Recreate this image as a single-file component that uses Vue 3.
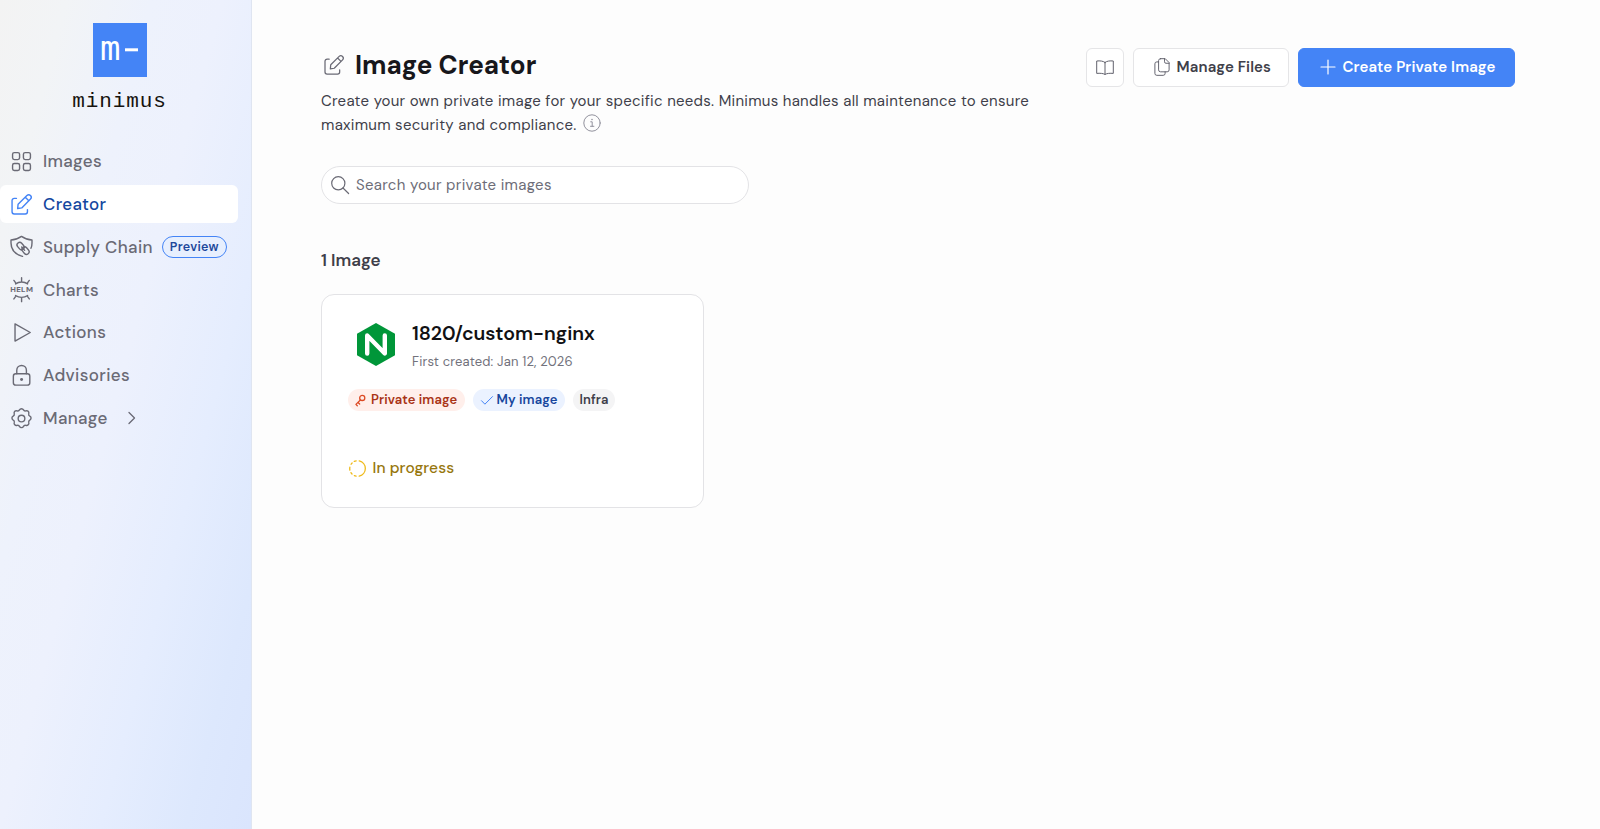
<template>
  <div class="layout">
    <!-- Sidebar -->
    <aside class="sidebar">
      <div class="brand">
        <svg class="brand-mark" viewBox="0 0 54 54">
          <rect width="54" height="54" fill="#4484f6" />
          <text class="brand-letter" x="7" y="36.500">m</text>
          <rect x="32" y="25.300" width="13" height="3" fill="#fff" />
        </svg>
        <span class="brand-name">minimus</span>
      </div>

      <nav class="nav">
        <a
          v-for="item in navItems"
          :key="item.id"
          class="nav-item"
          :class="{ active: item.id === current }"
          @click="current = item.id"
        >
          <svg class="nav-icon" viewBox="0 0 24 24">
            <g v-if="item.id === 'images'">
              <rect x="1.800" y="1.800" width="8" height="8" rx="2" />
              <rect x="14.200" y="1.800" width="8" height="8" rx="2" />
              <rect x="1.800" y="14.200" width="8" height="8" rx="2" />
              <rect x="14.200" y="14.200" width="8" height="8" rx="2" />
            </g>
            <path v-else-if="item.id === 'creator'" :d="editPath" />
            <g v-else-if="item.id === 'supply'">
              <path d="M13.200 23.300C5 21 0 15.500 0 8V4.500C5 4.500 8.500 3 12 .500c3.500 2.500 7 4 12 4V8c0 2.300-.4 4.300-1.200 6" />
              <rect x="8" y="6.800" width="6" height="9.400" rx="3" transform="rotate(-40 11 11.500)" />
              <rect x="13.600" y="12" width="6" height="9.400" rx="3" transform="rotate(-40 16.600 16.700)" />
              <path d="M12.200 12.600l3.400 3.800" />
            </g>
            <g v-else-if="item.id === 'charts'">
              <path d="M5.200 5.600c4-3 9.800-3 13.800 0M5.200 18.800c4 3 9.800 3 13.800 0M12.100 3.300V-1.500M5.800 5.100L3.300 1.600M18.400 5.100l2.500-3.500M12.100 21.100v4.800M5.800 19.300l-2.500 3.500M18.400 19.300l2.500 3.500" />
              <text class="helm" x="-1" y="15.300" textLength="26">HELM</text>
            </g>
            <path v-else-if="item.id === 'actions'" d="M4.600 2.200v19.600L22 12z" />
            <g v-else-if="item.id === 'advisories'">
              <rect x="2.700" y="10" width="18.800" height="13" rx="2.800" />
              <path d="M6.600 10V6a5.500 5.500 0 0 1 11 0v4" />
              <circle class="solid" cx="12.100" cy="16.500" r="1.700" />
            </g>
            <g v-else>
              <path :d="gearPath" />
              <circle cx="12" cy="12" r="3.800" />
            </g>
          </svg>
          <span class="nav-label">{{ item.label }}</span>
          <span v-if="item.badge" class="preview-badge">{{ item.badge }}</span>
          <svg v-if="item.expandable" class="chevron" viewBox="0 0 8 14">
            <path d="M1 1.500L6.500 7 1 12.500" />
          </svg>
        </a>
      </nav>
    </aside>

    <!-- Main content -->
    <main class="main">
      <header class="header">
        <div class="intro">
          <div class="heading">
            <svg class="heading-icon" viewBox="0 0 24 24"><path :d="editPath" /></svg>
            <h1>Image Creator</h1>
          </div>
          <p class="description">
            Create your own private image for your specific needs. Minimus handles all maintenance to ensure<br>
            <span>maximum security and compliance.</span>
            <svg class="info" viewBox="0 0 18 18">
              <circle cx="9" cy="9" r="8.200" />
              <path d="M7.700 7.800h1.500v4.500M7.500 12.300h3.400" />
              <circle class="solid" cx="9" cy="5.500" r=".8" />
            </svg>
          </p>
        </div>

        <div class="header-actions">
          <button class="btn btn-icon">
            <svg class="book" viewBox="0 0 18 15">
              <path d="M9 2.400C7 .9 4 .7.700 1v12.400c3.300-.3 6.300-.1 8.300 1 2-1.100 5-1.300 8.300-1V1C14 .700 11 .9 9 2.400zM9 2.400v12" />
            </svg>
          </button>
          <button class="btn btn-files">
            <svg class="files" viewBox="0 0 16 19">
              <path d="M6.500.700h4.800l4 4v7.500a2 2 0 0 1-2 2H6.500a2 2 0 0 1-2-2V2.700a2 2 0 0 1 2-2zM10.600.700V3.900a1.500 1.500 0 0 0 1.500 1.500h3.200M4.500 4H2.700a2 2 0 0 0-2 2v9.800a2 2 0 0 0 2 2h6.500a2 2 0 0 0 2-2v-1.600" />
            </svg>
            <span>Manage Files</span>
          </button>
          <button class="btn btn-primary">
            <svg class="plus" viewBox="0 0 14 14"><path d="M7 0v14M0 7h14" /></svg>
            <span>Create Private Image</span>
          </button>
        </div>
      </header>

      <div class="search">
        <svg class="search-icon" viewBox="0 0 18 18">
          <circle cx="7.300" cy="7.300" r="6.600" />
          <path d="M12 12l5.600 5.500" />
        </svg>
        <input v-model="query" type="text" placeholder="Search your private images">
      </div>

      <h2 class="count">1 Image</h2>

      <article class="card">
        <div class="card-head">
          <svg class="nginx" viewBox="0 0 38 43">
            <path d="M19 0l19 10.700v21.600L19 43 0 32.300V10.700z" fill="#009639" />
            <path d="M10.200 30.500V12.500L27.800 30.500V12.500" fill="none" stroke="#fff" stroke-width="4.400" stroke-linecap="round" stroke-linejoin="round" />
          </svg>
          <div>
            <h3>1820/custom-nginx</h3>
            <p class="created">First created: Jan 12, 2026</p>
          </div>
        </div>

        <div class="tags">
          <span class="tag tag-private">
            <svg class="key" viewBox="0 0 12 13">
              <circle cx="7.900" cy="3.700" r="2.800" />
              <path d="M5.900 5.900L1 10.700l1.500 1.500M3.300 8.600l1.800 1.800" />
            </svg>
            <span>Private image</span>
          </span>
          <span class="tag tag-mine">
            <svg class="check" viewBox="0 0 12 9"><path d="M.5 4.700l3.400 3.500L11.500.600" /></svg>
            <span>My image</span>
          </span>
          <span class="tag tag-infra">Infra</span>
        </div>

        <div class="status">
          <svg class="spinner" viewBox="0 0 18 18">
            <path d="M10.800.900a8.300 8.300 0 0 1 0 16.200M7.500 17.150a8.200 8.200 0 0 1-1.800-.6M3.200 14.900a8.200 8.200 0 0 1-1.100-1.500M.9 10.600a8.200 8.200 0 0 1 0-2.900M2.200 4.500a8.200 8.200 0 0 1 1.100-1.400M5.600 1.500a8.200 8.200 0 0 1 2-.6" />
          </svg>
          <span>In progress</span>
        </div>
      </article>
    </main>
  </div>
</template>

<script setup>
import { ref } from 'vue'

const current = ref('creator')
const query = ref('')

const navItems = [
  { id: 'images', label: 'Images' },
  { id: 'creator', label: 'Creator' },
  { id: 'supply', label: 'Supply Chain', badge: 'Preview' },
  { id: 'charts', label: 'Charts' },
  { id: 'actions', label: 'Actions' },
  { id: 'advisories', label: 'Advisories' },
  { id: 'manage', label: 'Manage', expandable: true }
]

// shared by the sidebar entry and the page heading
const editPath =
  'M6.200 5H3.700A2.500 2.500 0 0 0 1.200 7.500v12.800a2.500 2.500 0 0 0 2.500 2.500h12.600a2.500 2.500 0 0 0 2.500-2.500v-2.500' +
  'M7.600 16.600l.5-4.900L18.200 1.700a2.900 2.900 0 0 1 4.100 4.100L12.300 15.900zM16.300 3.600l4.100 4.100'

const gearPath =
  'M9.700 2.200c1-1.900 3.600-1.900 4.600 0 .5 1 1.600 1.400 2.700 1.100 2-.7 3.900 1.100 3.300 3.200-.3 1 .1 2.200 1.200 2.700' +
  ' 1.900 1 1.900 3.600 0 4.600-1 .5-1.500 1.600-1.200 2.700.7 2.100-1.200 4-3.300 3.300-1-.3-2.200.1-2.700 1.200-1 1.900-3.600 1.900-4.600 0' +
  '-.5-1-1.600-1.500-2.700-1.200-2.100.7-4-1.200-3.300-3.300.3-1-.1-2.200-1.200-2.700-1.900-1-1.900-3.600 0-4.600 1-.5 1.500-1.600 1.200-2.700' +
  '-.7-2.100 1.200-3.900 3.300-3.200 1 .3 2.200-.1 2.700-1.100z'
</script>

<style>
body {
  margin: 0;
  background: #fdfdfd;
}
</style>

<style scoped>
.layout {
  display: flex;
  min-height: 829px;
  font-family: "DM Sans", Inter, "Liberation Sans", sans-serif;
  color: #3f3f4a;
}

svg {
  display: block;
  flex: none;
  overflow: visible;
  fill: none;
  stroke: currentColor;
  stroke-linecap: round;
  stroke-linejoin: round;
}

.solid {
  fill: currentColor;
  stroke: none;
}

h1, h2, h3, p {
  margin: 0;
}

/* Sidebar */
.sidebar {
  box-sizing: border-box;
  flex: none;
  width: 252px;
  border-right: 1px solid #dfe5f1;
  background: linear-gradient(105deg, #f3f3f3 0%, #f2f4f6 14%, #eef2fc 32%, #edf1fd 47%, #e5edfe 68%, #dde8fd 86%, #dae5fd 100%);
}

.brand {
  display: flex;
  flex-direction: column;
  align-items: center;
  height: 142px;
  padding: 22.500px 12px 0 0;
  box-sizing: border-box;
}

.brand-mark {
  width: 54px;
  height: 54px;
  stroke: none;
}

.brand-letter {
  fill: #fff;
  font: 34px "DejaVu Sans Mono", monospace;
}

.brand-name {
  margin-top: 11px;
  font: 21px/28px "Liberation Mono", monospace;
  letter-spacing: 0.900px;
  color: #16130f;
}

.nav {
  display: flex;
  flex-direction: column;
  gap: 4.300px;
}

.nav-item {
  display: flex;
  align-items: center;
  box-sizing: border-box;
  width: 238px;
  height: 38.500px;
  padding-left: 11px;
  border-radius: 6px;
  color: #6a6a75;
  cursor: pointer;
}

.nav-item.active {
  background: #fff;
  color: #4484f6;
}

.nav-icon {
  width: 21px;
  height: 21px;
  margin-right: 11px;
  stroke-width: 1.600;
}

.nav-label {
  font-size: 17px;
  font-weight: 500;
  letter-spacing: 0.350px;
}

.active .nav-label {
  color: #14479f;
}

.helm {
  fill: currentColor;
  stroke: none;
  font: 800 9px "DM Sans", Inter, sans-serif;
}

.preview-badge {
  box-sizing: border-box;
  width: 65px;
  height: 22px;
  margin-left: 9px;
  border: 1px solid #4484f6;
  border-radius: 11px;
  background: #e7effe;
  color: #1c479b;
  font-size: 12.500px;
  font-weight: 650;
  letter-spacing: 0.300px;
  line-height: 20px;
  text-align: center;
}

.chevron {
  width: 8px;
  height: 14px;
  margin-left: 20px;
  stroke-width: 1.300;
}

/* Main */
.main {
  flex: 1;
  padding: 48px 85.500px 0 69px;
}

.header {
  display: flex;
  justify-content: space-between;
  height: 118px;
}

.heading {
  display: flex;
  align-items: center;
  height: 34px;
}

.heading-icon {
  width: 20px;
  height: 20px;
  margin: 0 11px 0 3px;
  color: #6a6a75;
  stroke-width: 1.500;
}

h1 {
  color: #17171b;
  font-size: 26px;
  font-weight: 680;
  line-height: 34px;
}

.description {
  margin-top: 7px;
  font-size: 15px;
  letter-spacing: 0.280px;
  line-height: 24px;
  white-space: nowrap;
}

.info {
  display: inline-block;
  width: 18px;
  height: 18px;
  margin-left: 6.500px;
  color: #92929d;
  vertical-align: -2px;
}

.header-actions {
  display: flex;
  gap: 9px;
}

.btn {
  display: flex;
  align-items: center;
  box-sizing: border-box;
  height: 38.500px;
  padding: 0;
  border: 1px solid #e5e5e7;
  border-radius: 6px;
  background: #fff;
  color: #3f3f4a;
  font-family: inherit;
  font-size: 15px;
  font-weight: 600;
  letter-spacing: 0.120px;
  white-space: nowrap;
}

.btn-icon {
  justify-content: center;
  width: 38px;
}

.book {
  width: 18px;
  height: 15px;
  color: #62626d;
}

.btn-files {
  width: 156px;
  padding-left: 20px;
}

.files {
  width: 16px;
  height: 18.500px;
  margin-right: 6.500px;
  color: #62626d;
}

.btn-primary {
  width: 216.500px;
  padding-left: 22px;
  border-color: #4484f6;
  background: #4484f6;
  color: #fff;
}

.plus {
  width: 14px;
  height: 14px;
  margin-right: 7.500px;
  stroke-width: 1.200;
}

.search {
  display: flex;
  align-items: center;
  box-sizing: border-box;
  width: 428px;
  height: 38px;
  padding-left: 9px;
  border: 1px solid #e3e3e6;
  border-radius: 19px;
  background: #fff;
}

.search-icon {
  width: 18px;
  height: 18px;
  margin-right: 7px;
  color: #6a6a75;
  stroke-width: 1.200;
}

.search input {
  flex: 1;
  padding: 0;
  border: 0;
  outline: 0;
  background: none;
  font-family: inherit;
  font-size: 15px;
  letter-spacing: 0.300px;
}

.search input::placeholder {
  color: #6d6d78;
}

.count {
  margin: 45px 0 22px;
  font-size: 17px;
  font-weight: 600;
  line-height: 23px;
}

.card {
  box-sizing: border-box;
  width: 383px;
  height: 214px;
  padding: 25px 25.500px 0;
  border: 1px solid #e3e3e6;
  border-radius: 13px;
  background: #fff;
}

.card-head {
  display: flex;
  height: 69px;
}

.nginx {
  width: 38px;
  height: 43px;
  margin: 3px 17.500px 0 9px;
  stroke: none;
}

h3 {
  color: #111114;
  font-size: 19.500px;
  font-weight: 600;
  line-height: 28px;
}

.created {
  margin-top: 5px;
  color: #72727c;
  font-size: 13px;
  letter-spacing: 0.170px;
  line-height: 18px;
}

.tags {
  display: flex;
  gap: 8.500px;
}

.tag {
  display: flex;
  align-items: center;
  box-sizing: border-box;
  height: 22px;
  border-radius: 11px;
  font-size: 13px;
  font-weight: 600;
  letter-spacing: 0.120px;
  line-height: 16px;
  white-space: nowrap;
}

.tag-private {
  width: 117px;
  padding-left: 7px;
  background: #ffefeb;
  color: #a93416;
}

.key {
  width: 11px;
  height: 13px;
  margin-right: 5.500px;
  color: #dc4a24;
  stroke-width: 1.400;
}

.tag-mine {
  width: 91.500px;
  padding-left: 7.500px;
  background: #ebf2ff;
  color: #17469d;
}

.check {
  width: 12px;
  height: 9px;
  margin-right: 4px;
  color: #4484f6;
}

.tag-infra {
  width: 42px;
  justify-content: center;
  background: #f4f4f5;
}

.status {
  display: flex;
  align-items: center;
  gap: 6.500px;
  height: 22px;
  margin-top: 46px;
  padding-left: 1.500px;
  color: #97770d;
  font-size: 15.500px;
  font-weight: 500;
  letter-spacing: 0.100px;
}

.spinner {
  width: 17px;
  height: 17px;
  color: #efbb1c;
  stroke-width: 1.400;
}
</style>
